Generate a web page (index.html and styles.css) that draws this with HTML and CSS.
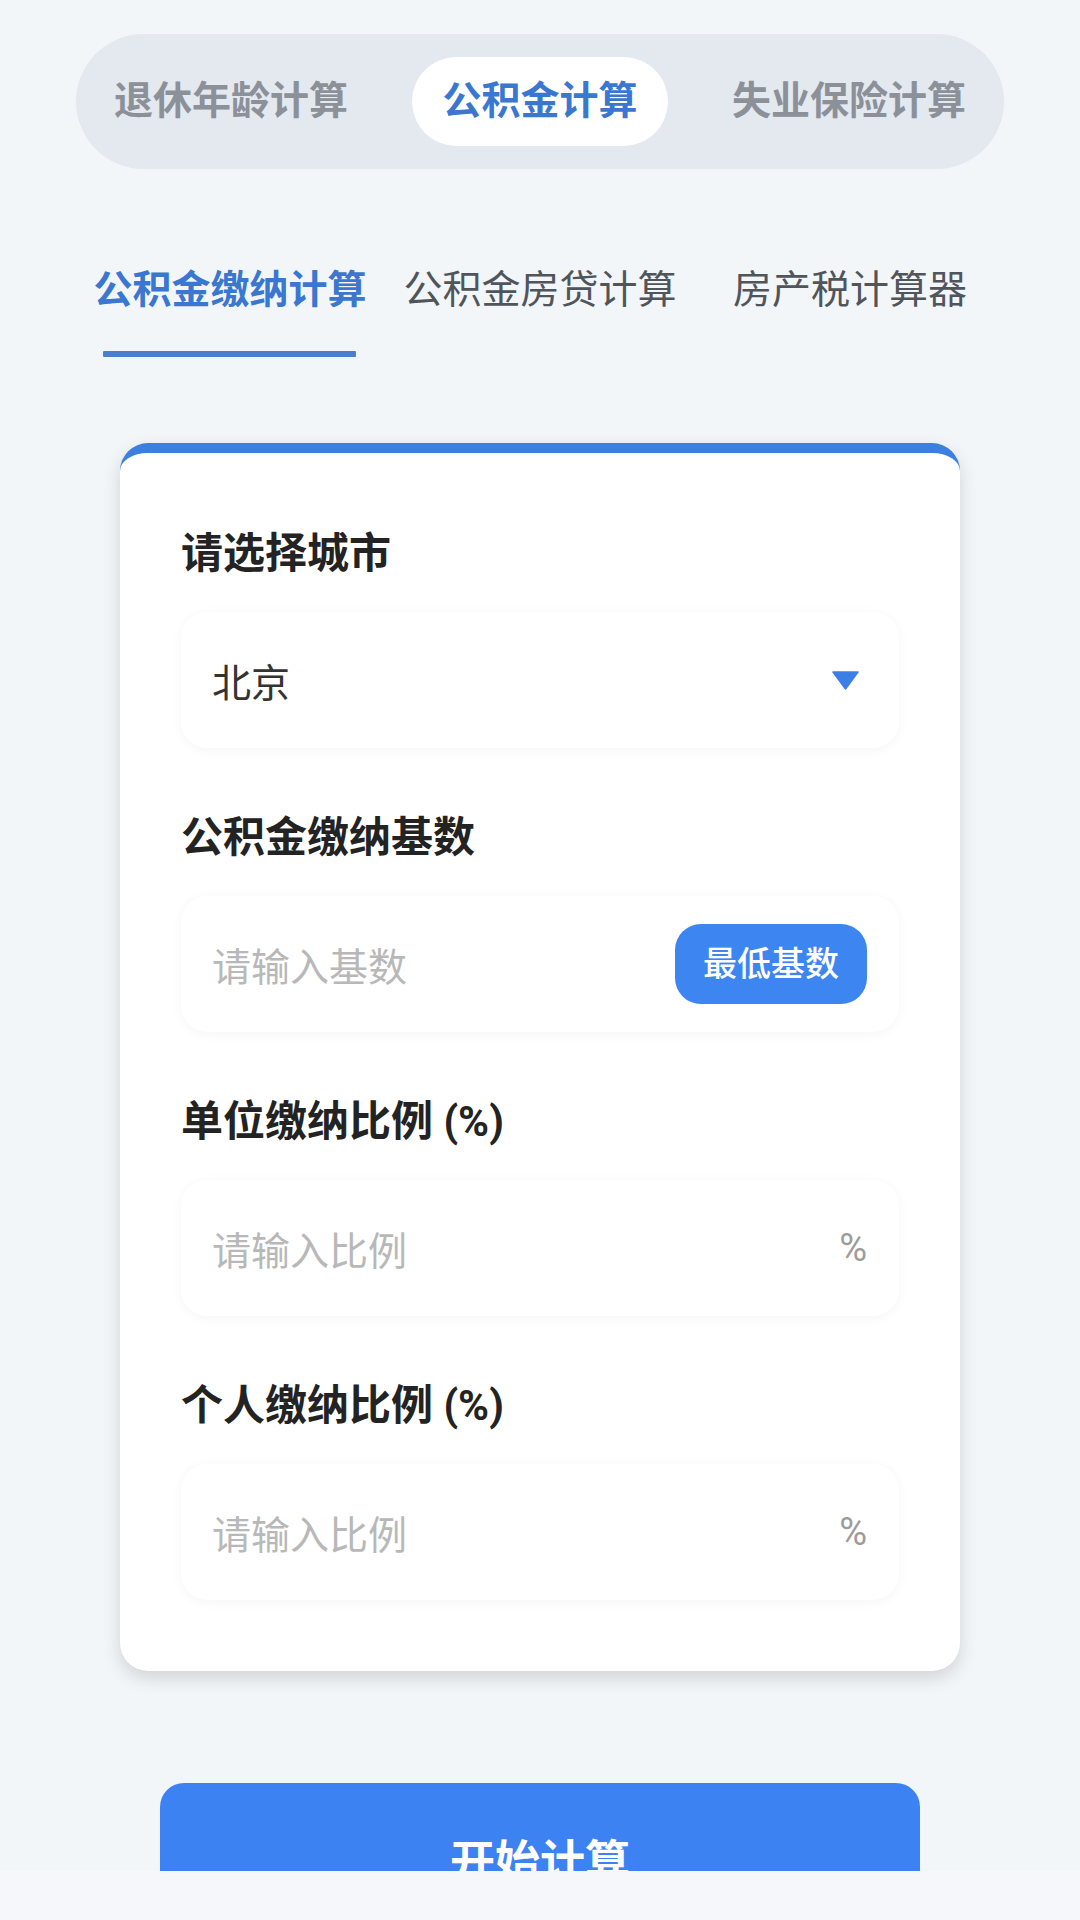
FILE: index.html
```html
<!DOCTYPE html>
<html lang="zh-CN">
<head>
<meta charset="utf-8">
<title>公积金计算</title>
<link rel="stylesheet" href="styles.css">
</head>
<body>
<div class="screen">
  <div class="segment">
    <div class="seg-item">退休年龄计算</div>
    <div class="seg-item active">公积金计算</div>
    <div class="seg-item">失业保险计算</div>
  </div>

  <div class="subtabs">
    <div class="subtab active">公积金缴纳计算<span class="underline"></span></div>
    <div class="subtab">公积金房贷计算</div>
    <div class="subtab">房产税计算器</div>
  </div>

  <div class="card">
    <div class="field">
      <div class="label">请选择城市</div>
      <div class="box">
        <span class="value">北京</span>
        <svg class="caret" width="27" height="19" viewBox="0 0 27 19"><path d="M1 1 H26 L13.5 18 Z" fill="#3b7fe6" stroke="#3b7fe6" stroke-width="1.5" stroke-linejoin="round"/></svg>
      </div>
    </div>
    <div class="field">
      <div class="label">公积金缴纳基数</div>
      <div class="box">
        <span class="placeholder">请输入基数</span>
        <span class="min-btn">最低基数</span>
      </div>
    </div>
    <div class="field">
      <div class="label">单位缴纳比例 (%)</div>
      <div class="box">
        <span class="placeholder">请输入比例</span>
        <span class="unit">%</span>
      </div>
    </div>
    <div class="field">
      <div class="label">个人缴纳比例 (%)</div>
      <div class="box">
        <span class="placeholder">请输入比例</span>
        <span class="unit">%</span>
      </div>
    </div>
  </div>

  <div class="start-btn">开始计算</div>
</div>
</body>
</html>
```

FILE: styles.css
```css
* { box-sizing: border-box; }

html, body {
  margin: 0;
  padding: 0;
}

body {
  width: 1080px;
  height: 1920px;
  overflow: hidden;
  background: #f5f7fa;
  font-family: Roboto, "Noto Sans CJK SC", sans-serif;
}

.screen {
  height: 1871px;
  overflow: hidden;
  background: #f3f6f9;
  padding-top: 34px;
}

/* top segmented control */
.segment {
  margin: 0 76px;
  height: 135px;
  padding: 23px 8px;
  border-radius: 68px;
  background: #e4e8ef;
  display: flex;
  justify-content: space-between;
  align-items: center;
}

.seg-item {
  height: 89px;
  line-height: 89px;
  padding: 0 30px;
  border-radius: 45px;
  font-size: 39px;
  font-weight: 700;
  color: #8b9099;
  white-space: nowrap;
}

.seg-item.active {
  background: #ffffff;
  color: #3a77d0;
}

/* sub tabs */
.subtabs {
  margin: 93px 75px 0;
  display: grid;
  grid-template-columns: repeat(3, 1fr);
}

.subtab {
  position: relative;
  height: 95px;
  line-height: 56px;
  text-align: center;
  font-size: 39px;
  color: #50555b;
  white-space: nowrap;
}

.subtab.active {
  color: #3a77d0;
  font-weight: 700;
}

.underline {
  position: absolute;
  left: 50%;
  top: 89px;
  width: 253px;
  height: 6px;
  margin-left: -127px;
  background: #4a7fcf;
  border-radius: 1px;
}

/* card */
.card {
  margin: 86px 120px 0;
  background: #ffffff;
  border-top: 10px solid #3b7fe0;
  border-radius: 28px;
  box-shadow: 0 7px 18px rgba(0, 0, 0, 0.14);
  padding: 72px 61px 71px;
}

.field + .field {
  margin-top: 61px;
}

.label {
  font-size: 42px;
  line-height: 58px;
  font-weight: 700;
  color: #232323;
  margin-bottom: 29px;
}

.box {
  height: 136px;
  border-radius: 26px;
  background: #ffffff;
  box-shadow: 0 2px 12px rgba(0, 0, 0, 0.045);
  padding: 0 32px 0 31px;
  display: flex;
  align-items: center;
  justify-content: space-between;
}

.value {
  font-size: 39px;
  color: #333333;
}

.caret {
  display: block;
  margin-right: 8px;
}

.placeholder {
  font-size: 39px;
  color: #b8b8b8;
}

.unit {
  font-size: 38px;
  color: #9c9c9c;
}

.min-btn {
  width: 192px;
  height: 80px;
  line-height: 80px;
  text-align: center;
  border-radius: 26px;
  background: #3d85f0;
  color: #ffffff;
  font-size: 34px;
  font-weight: 500;
}

/* start button */
.start-btn {
  margin: 112px 160px 0;
  height: 150px;
  line-height: 160px;
  border-radius: 24px;
  background: #3d82f2;
  color: #ffffff;
  text-align: center;
  font-size: 45px;
  font-weight: 700;
}
```
